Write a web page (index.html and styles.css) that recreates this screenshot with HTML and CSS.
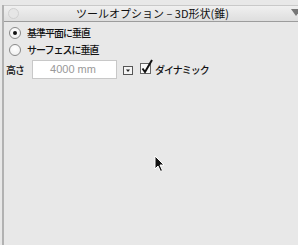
FILE: index.html
```html
<!DOCTYPE html>
<html>
<head>
<meta charset="utf-8">
<link rel="stylesheet" href="styles.css">
</head>
<body>
<div class="panel">
  <div class="titlebar">
    <span class="tb-circle"></span>
    <span class="tb-title">ツールオプション – 3D形状(錐)</span>
    <span class="tb-arrow"></span>
  </div>
  <div class="content">
    <div class="row radio-row">
      <span class="radio on"><span class="dot"></span></span>
      <span class="label">基準平面に垂直</span>
    </div>
    <div class="row radio-row">
      <span class="radio"></span>
      <span class="label">サーフェスに垂直</span>
    </div>
    <div class="row height-row">
      <span class="label h-label">高さ</span>
      <span class="input">4000 mm</span>
      <span class="dd-btn"><svg width="10" height="9" viewBox="0 0 10 9"><rect x="0.5" y="0.5" width="9" height="8" fill="#f4f4f4" stroke="#555"/><path d="M3 3.5 L7 3.5 L5 6 Z" fill="#222"/></svg></span>
      <span class="check"><svg width="14" height="16" viewBox="0 0 14 16"><rect x="0.5" y="4.5" width="10" height="10" fill="#fafafa" stroke="#666"/><path d="M2.5 9.5 L5 13 L12 1" fill="none" stroke="#111" stroke-width="2"/></svg></span>
      <span class="label">ダイナミック</span>
    </div>
  </div>
  <svg class="cursor" width="12" height="18" viewBox="0 0 12 18"><path d="M1 1 L1 14 L4 11 L6.5 16.5 L8.5 15.5 L6 10 L10 10 Z" fill="#111" stroke="#fff" stroke-width="1"/></svg>
</div>
</body>
</html>
```

FILE: styles.css
```css
html, body {
  margin: 0;
  padding: 0;
  background: #e8e8e8;
  font-family: "Noto Sans CJK JP", "Liberation Sans", sans-serif;
  color: #111;
}
.panel {
  position: relative;
  width: 296px;
  height: 245px;
  margin-left: 2px;
  border-left: 2px solid #b2b2b2;
  box-sizing: border-box;
}
.titlebar {
  margin-top: 5px;
  height: 15px;
  border-top: 1px solid #c9c9c9;
  border-bottom: 1px solid #9c9c9c;
  background: linear-gradient(#f0f0f0, #dedede);
  display: flex;
  align-items: center;
  position: relative;
}
.tb-circle {
  width: 9px;
  height: 9px;
  border-radius: 50%;
  border: 1px solid #d0d0d0;
  background: #e6e6e6;
  margin-left: 4px;
}
.tb-title {
  position: absolute;
  left: 72px;
  top: 0;
  font-size: 11px;
  line-height: 15px;
  color: #111;
}
.tb-arrow {
  position: absolute;
  right: -3px;
  top: 3px;
  width: 0;
  height: 0;
  border-left: 5px solid transparent;
  border-right: 5px solid transparent;
  border-top: 7px solid #777;
}
.content {
  padding: 2px 0 0 3px;
}
.row {
  display: flex;
  align-items: center;
}
.radio-row {
  height: 17px;
}
.radio {
  width: 10px;
  height: 10px;
  border-radius: 50%;
  border: 1px solid #8a8a8a;
  background: radial-gradient(circle at 50% 35%, #ffffff, #ececec);
  display: flex;
  align-items: center;
  justify-content: center;
  margin-left: 2px;
  margin-right: 6px;
}
.dot {
  width: 4px;
  height: 4px;
  border-radius: 50%;
  background: #111;
}
.label {
  font-size: 10px;
  line-height: 12px;
  letter-spacing: -1px;
  font-weight: 500;
}
.height-row {
  margin-top: 2px;
  height: 19px;
}
.h-label {
  margin-left: -1px;
  width: 26px;
}
.input {
  width: 85px;
  height: 19px;
  box-sizing: border-box;
  border: 1px solid #c8c8c8;
  background: #fff;
  color: #999;
  font-family: "Liberation Sans", sans-serif;
  font-size: 11px;
  line-height: 17px;
  text-align: center;
  padding-right: 3px;
}
.dd-btn {
  margin-left: 6px;
  display: flex;
  margin-top: 2px;
}
.check {
  margin-left: 7px;
  display: flex;
  margin-top: -5px;
  margin-right: 1px;
}
.cursor {
  position: absolute;
  left: 150px;
  top: 150px;
}
```
